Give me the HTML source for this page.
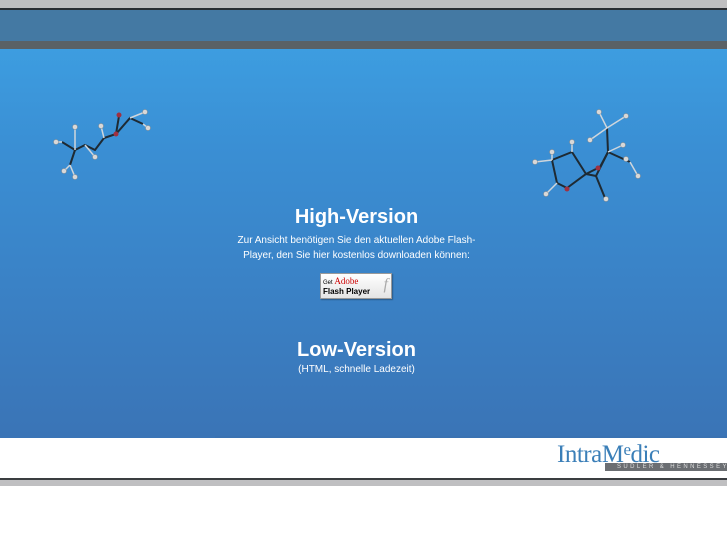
<!DOCTYPE html>
<html><head><meta charset="utf-8"><style>
html,body{margin:0;padding:0;width:727px;height:545px;overflow:hidden;background:#fff;font-family:"Liberation Sans",sans-serif}
.abs{position:absolute;left:0;width:727px}
.c{position:absolute;left:0;width:713px;text-align:center;color:#fff}
</style></head><body>
<div class="abs" style="top:0;height:8px;background:#bfbfc1"></div>
<div class="abs" style="top:8px;height:2px;background:#2a2e33"></div>
<div class="abs" style="top:10px;height:31px;background:#4479a3"></div>
<div class="abs" style="top:41px;height:8px;background:#5a6165"></div>
<div class="abs" style="top:49px;height:389px;background:linear-gradient(180deg,#3d9de0 0%,#3a8fd4 25%,#3a82c6 60%,#3a74b6 100%)"></div>
<div class="abs" style="top:436px;height:2px;left:215px;width:512px;background:#3a72b2"></div>
<div class="abs" style="top:478px;height:2px;background:#3a3d40"></div>
<div class="abs" style="top:480px;height:6px;background:#bfbfc1"></div>

<svg class="abs" style="top:0;height:545px" width="727" height="545">
<g stroke="#1e2a33" stroke-width="2" fill="none">
<polyline points="62,142 75,150 85,145 95,150 104,138 116,134 130,118 143,124"/>
<line x1="75" y1="150" x2="70" y2="165"/><line x1="116" y1="134" x2="119" y2="116"/>
<polyline points="552,160 572,152 586,174 600,167 608,152 630,162"/>
<polyline points="552,160 557,183 567,188 586,174 596,176 608,152"/>
<line x1="608" y1="152" x2="607" y2="128"/><line x1="596" y1="176" x2="605" y2="198"/>
</g>
<g stroke="#cfd6dc" stroke-width="1.5">
<line x1="62" y1="142" x2="56" y2="142"/><line x1="70" y1="165" x2="64" y2="171"/><line x1="70" y1="165" x2="75" y2="177"/><line x1="75" y1="150" x2="75" y2="127"/><line x1="85" y1="145" x2="95" y2="157"/><line x1="104" y1="138" x2="101" y2="126"/><line x1="130" y1="118" x2="145" y2="112"/><line x1="143" y1="124" x2="148" y2="128"/>
<line x1="552" y1="160" x2="535" y2="162"/><line x1="552" y1="160" x2="552" y2="152"/><line x1="572" y1="152" x2="572" y2="142"/><line x1="557" y1="183" x2="546" y2="194"/><line x1="607" y1="128" x2="626" y2="116"/><line x1="607" y1="128" x2="599" y2="112"/><line x1="607" y1="128" x2="590" y2="140"/><line x1="630" y1="162" x2="638" y2="176"/><line x1="608" y1="152" x2="623" y2="145"/>
</g>
<g fill="#d8d8d8" stroke="#888" stroke-width=".5">
<circle cx="56" cy="142" r="2.5"/><circle cx="64" cy="171" r="2.5"/><circle cx="75" cy="127" r="2.5"/><circle cx="95" cy="157" r="2.5"/><circle cx="101" cy="126" r="2.5"/><circle cx="148" cy="128" r="2.5"/><circle cx="145" cy="112" r="2.5"/><circle cx="75" cy="177" r="2.5"/>
<circle cx="535" cy="162" r="2.5"/><circle cx="552" cy="152" r="2.5"/><circle cx="572" cy="142" r="2.5"/><circle cx="546" cy="194" r="2.5"/><circle cx="606" cy="199" r="2.5"/><circle cx="626" cy="116" r="2.5"/><circle cx="599" cy="112" r="2.5"/><circle cx="590" cy="140" r="2.5"/><circle cx="638" cy="176" r="2.5"/><circle cx="623" cy="145" r="2.5"/><circle cx="626" cy="159" r="2.5"/>
</g>
<circle cx="567" cy="189" r="2.5" fill="#a03040"/><circle cx="598" cy="168" r="2.5" fill="#a03040"/>
<circle cx="116" cy="134" r="2.5" fill="#a03040"/><circle cx="119" cy="115" r="2.5" fill="#a03040"/>
</svg>

<div class="c" style="top:205px">
<div style="font-size:20px;font-weight:bold;line-height:24px">High-Version</div>
<div style="font-size:10px;line-height:15px;margin-top:4px">Zur Ansicht benötigen Sie den aktuellen Adobe Flash-<br>Player, den Sie hier kostenlos downloaden können:</div>
</div>
<div style="position:absolute;left:320px;top:273px;width:70px;height:24px;background:linear-gradient(#fff,#e4e4e4);border:1px solid #999;box-shadow:1px 1px 1px rgba(0,0,0,.3);font-size:8px;color:#000">
<div style="position:absolute;left:2px;top:2px;font-size:6px">Get <span style="color:#c00;font-family:'Liberation Serif',serif;font-size:9px">Adobe</span></div>
<div style="position:absolute;left:2px;top:13px;font-weight:bold;font-size:8px">Flash Player</div>
<div style="position:absolute;right:3px;top:2px;font-size:16px;color:#aaa;font-family:'Liberation Serif',serif;font-style:italic">f</div>
</div>
<div class="c" style="top:338px">
<div style="font-size:20px;font-weight:bold;line-height:24px">Low-Version</div>
<div style="font-size:10px;line-height:14px;margin-top:1px">(HTML, schnelle Ladezeit)</div>
</div>

<div style="position:absolute;left:557px;top:440px;font-family:'Liberation Serif',serif;font-size:25px;color:#3b7fb8;letter-spacing:-.5px;white-space:nowrap">Intra<span style="font-size:25px">M</span><span style="font-size:17px;vertical-align:7px">e</span>dic</div>
<div style="position:absolute;left:605px;top:463px;width:122px;height:8px;background:#6b6e72;color:#ddd;font-size:6px;line-height:8px;letter-spacing:2.4px;white-space:nowrap;overflow:hidden;padding-left:12px;box-sizing:border-box">SUDLER &amp; HENNESSEY G</div>
</body></html>
